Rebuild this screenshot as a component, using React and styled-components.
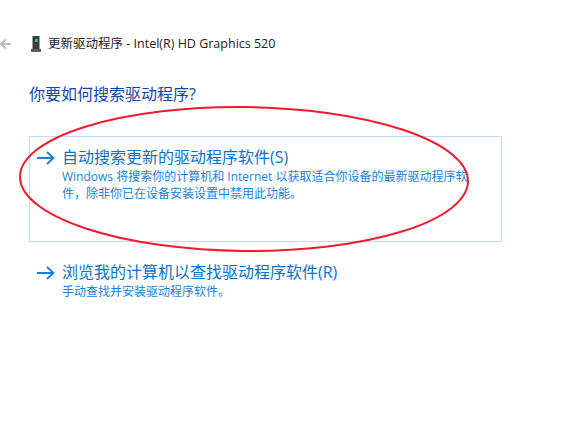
import React from 'react';
import styled, { createGlobalStyle } from 'styled-components';

const GlobalStyle = createGlobalStyle`
  html, body {
    margin: 0;
    padding: 0;
    background: #ffffff;
  }
`;

const Page = styled.div`
  position: relative;
  width: 579px;
  height: 439px;
  overflow: hidden;
  background: #ffffff;
  font-family: "Open Sans", "Noto Sans CJK SC", sans-serif;
`;

const Header = styled.div`
  display: flex;
  align-items: center;
  height: 20px;
  padding-top: 34px;
`;

const BackIcon = styled.svg`
  width: 12px;
  height: 12px;
`;

const DeviceIcon = styled.svg`
  width: 10px;
  height: 16px;
  margin-left: 19px;
`;

const HeaderTitle = styled.div`
  margin-left: 7px;
  font-size: 12.5px;
  line-height: 20px;
  color: #222222;
  white-space: nowrap;
`;

const Content = styled.div`
  padding: 28px 0 0 29px;
  width: 472px;
`;

const Question = styled.h1`
  margin: 0;
  font-size: 16px;
  font-weight: 400;
  line-height: 24px;
  color: #0f49a8;
  white-space: nowrap;
`;

const OptionRow = styled.div`
  box-sizing: border-box;
  display: flex;
  width: 473px;
  height: ${(p) => p.$height}px;
  margin-top: ${(p) => p.$top}px;
  padding: 9px 0 0 7px;
  border: 1px solid ${(p) => (p.$selected ? '#bfdcf2' : 'transparent')};
`;

const ArrowIcon = styled.svg`
  flex: none;
  width: 18px;
  height: 14px;
  margin-top: 5px;
`;

const OptionText = styled.div`
  margin-left: 7px;
`;

const OptionTitle = styled.div`
  font-size: 16px;
  line-height: 22px;
  color: #0a72c9;
  white-space: nowrap;
`;

const OptionDescription = styled.div`
  width: 415px;
  font-size: 12px;
  line-height: 17px;
  color: #1583dc;
`;

const Ellipse = styled.svg`
  position: absolute;
  left: 0;
  top: 0;
  width: 579px;
  height: 439px;
  pointer-events: none;
`;

const Arrow = () => (
  <ArrowIcon viewBox="0 0 18 14">
    <path d="M0 7H16M10 1L16.500 7L10 13" fill="none" stroke="#1a7fd6" strokeWidth="1.8" />
  </ArrowIcon>
);

const App = () => {
  return (
    <Page>
      <GlobalStyle />
      <Header>
        <BackIcon viewBox="0 0 12 12">
          <path d="M11 6H1M5.500 1.500L1 6L5.500 10.500" fill="none" stroke="#bdbdbd" strokeWidth="1.8" />
        </BackIcon>
        <DeviceIcon viewBox="0 0 10 16">
          <rect x="1.500" y="0" width="7" height="13" fill="#3a3d3f" />
          <rect x="0" y="13" width="10" height="3" fill="#5a5d5f" />
          <rect x="4" y="3" width="2.500" height="3" fill="#35d04a" />
        </DeviceIcon>
        <HeaderTitle>更新驱动程序 - Intel(R) HD Graphics 520</HeaderTitle>
      </Header>
      <Content>
        <Question>你要如何搜索驱动程序?</Question>
        <OptionRow $selected $height={106} $top={30}>
          <Arrow />
          <OptionText>
            <OptionTitle>自动搜索更新的驱动程序软件(S)</OptionTitle>
            <OptionDescription>
              Windows 将搜索你的计算机和 Internet 以获取适合你设备的最新驱动程序软件，除非你已在设备安装设置中禁用此功能。
            </OptionDescription>
          </OptionText>
        </OptionRow>
        <OptionRow $height={70} $top={9}>
          <Arrow />
          <OptionText>
            <OptionTitle>浏览我的计算机以查找驱动程序软件(R)</OptionTitle>
            <OptionDescription>手动查找并安装驱动程序软件。</OptionDescription>
          </OptionText>
        </OptionRow>
      </Content>
      <Ellipse viewBox="0 0 579 439">
        <ellipse cx="244" cy="179" rx="224" ry="72" fill="none" stroke="#ee1c2e" strokeWidth="2" transform="rotate(0.600 244 179)" />
      </Ellipse>
    </Page>
  );
};

export default App;
